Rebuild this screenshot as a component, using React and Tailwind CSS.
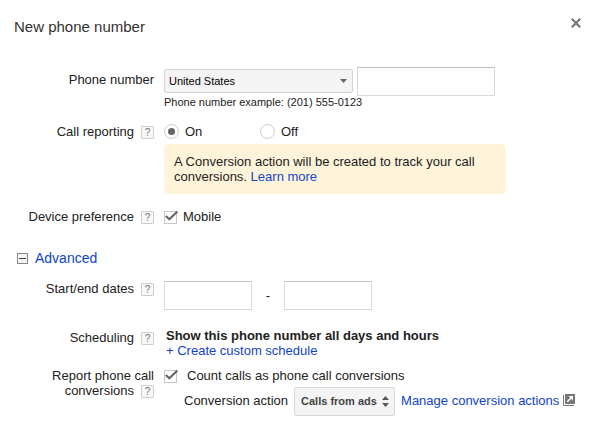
import React, { useState } from "react";

const link = "text-[#1144cc] hover:underline";

function Help({ topic }) {
  return (
    <button
      type="button"
      aria-label={`Help: ${topic}`}
      className="h-[13px] w-[13px] shrink-0 rounded-[1px] border border-[#cfcfcf] bg-[#f8f8f8] text-center text-[10px] leading-[11px] text-[#777777]"
    >
      ?
    </button>
  );
}

function Row({ label, className = "", labelClass = "", children }) {
  return (
    <div className={`grid grid-cols-[154px_1fr] gap-x-[10px] ${className}`}>
      <div className={`text-right ${labelClass}`}>{label}</div>
      <div className="min-w-0">{children}</div>
    </div>
  );
}

function LabelWithHelp({ htmlFor, id, children }) {
  return (
    <div className="flex items-start justify-end gap-[7px]">
      {htmlFor ? <label htmlFor={htmlFor}>{children}</label> : <span id={id}>{children}</span>}
      <div className="flex pt-[2px]">
        <Help topic={children} />
      </div>
    </div>
  );
}

function Check({ id, checked, onChange }) {
  return (
    <span className="relative mt-[2px] block h-[13px] w-[13px] shrink-0">
      <input
        id={id}
        type="checkbox"
        checked={checked}
        onChange={onChange}
        className="block h-[13px] w-[13px] appearance-none border border-[#c6c6c6] bg-white"
      />
      {checked && (
        <svg
          viewBox="0 0 15 13"
          className="pointer-events-none absolute top-[-1px] left-0 h-[13px] w-[15px]"
          aria-hidden="true"
        >
          <path d="M1.8 6 L5.3 9.3 L13.4 1.6" fill="none" stroke="#666666" strokeWidth="2.1" />
        </svg>
      )}
    </span>
  );
}

function Radio({ label, value, current, onChange }) {
  return (
    <label className="flex h-[15px] items-center gap-[6px]">
      <span className="grid h-[15px] w-[15px] shrink-0 place-items-center">
        <input
          type="radio"
          name="reporting"
          value={value}
          checked={current === value}
          onChange={() => onChange(value)}
          className="col-start-1 row-start-1 h-[15px] w-[15px] appearance-none rounded-full border border-[#cccccc] bg-white"
        />
        {current === value && (
          <span className="pointer-events-none z-10 col-start-1 row-start-1 h-[7px] w-[7px] rounded-full bg-[#666666]" />
        )}
      </span>
      {label}
    </label>
  );
}

const field = "block h-[29px] border border-[#d9d9d9] border-t-[#c0c0c0] bg-white px-2 text-[13px]";

export default function App() {
  const [reporting, setReporting] = useState("on");
  const [mobile, setMobile] = useState(true);
  const [count, setCount] = useState(true);
  const [open, setOpen] = useState(true);

  return (
    <main className="min-h-screen bg-white pb-[15px] font-['Liberation_Sans',Arial,sans-serif] text-[13px] leading-[15px] text-[#222222]">
      <header className="flex items-start justify-between pt-[18px] pr-[9px] pl-[14px]">
        <h1 className="text-[15px] leading-[18px] text-[#333333]">New phone number</h1>
        <button type="button" aria-label="Close" className="h-[10px] w-[10px]">
          <svg viewBox="0 0 10 10" className="h-[10px] w-[10px]" aria-hidden="true">
            <path d="M.8 .8 L9.2 9.2 M9.2 .8 L.8 9.2" stroke="#777777" strokeWidth="2.2" />
          </svg>
        </button>
      </header>

      <form className="mt-[31px]" onSubmit={(e) => e.preventDefault()}>
        <Row label={<label htmlFor="phone">Phone number</label>} labelClass="pt-[5px]">
          <div className="flex items-start gap-1">
            <div className="relative mt-[2px]">
              <select
                aria-label="Country"
                className="block h-[24px] w-[189px] appearance-none rounded-[2px] border border-[#d5d5d5] bg-[#f4f4f4] pr-5 pl-1 text-[11px] text-black"
              >
                <option>United States</option>
              </select>
              <svg
                viewBox="0 0 7 4"
                className="pointer-events-none absolute top-[10px] right-[6px] h-[4px] w-[7px]"
                aria-hidden="true"
              >
                <path d="M0 0 H7 L3.5 4 Z" fill="#666666" />
              </svg>
            </div>
            <input id="phone" type="tel" className={`${field} w-[138px]`} />
          </div>
          <p className="text-[11px] leading-[13px]">Phone number example: (201) 555-0123</p>
        </Row>

        <Row className="mt-[15px]" label={<LabelWithHelp id="reporting-label">Call reporting</LabelWithHelp>}>
          <div role="radiogroup" aria-labelledby="reporting-label" className="grid grid-cols-[96px_1fr]">
            <Radio label="On" value="on" current={reporting} onChange={setReporting} />
            <Radio label="Off" value="off" current={reporting} onChange={setReporting} />
          </div>
          <p className="mt-[5px] max-w-[342px] rounded-[5px] bg-[#fff4da] p-[10px]">
            A Conversion action will be created to track your call conversions.{" "}
            <a href="#learn" className={link}>Learn more</a>
          </p>
        </Row>

        <Row className="mt-[15px]" label={<LabelWithHelp id="device-label">Device preference</LabelWithHelp>}>
          <div className="flex gap-[6px]">
            <Check id="mobile" checked={mobile} onChange={() => setMobile(!mobile)} />
            <label htmlFor="mobile">Mobile</label>
          </div>
        </Row>

        <button
          type="button"
          aria-expanded={open}
          onClick={() => setOpen(!open)}
          className="mt-[26px] ml-[17px] flex items-center gap-[7px] text-[14px] leading-[16px] text-[#1144cc]"
        >
          <svg viewBox="0 0 11 11" className="h-[11px] w-[11px]" aria-hidden="true">
            <rect x=".5" y=".5" width="10" height="10" fill="#f4f4f4" stroke="#888888" />
            <path d="M2 5.5 H9" stroke="#444444" />
            {!open && <path d="M5.5 2 V9" stroke="#444444" />}
          </svg>
          Advanced
        </button>

        {open && (
          <div>
            <Row className="mt-[15px]" label={<LabelWithHelp htmlFor="start">Start/end dates</LabelWithHelp>}>
              <div className="flex items-center">
                <input id="start" type="text" aria-label="Start date" className={`${field} w-[88px]`} />
                <span className="w-[32px] text-center">-</span>
                <input type="text" aria-label="End date" className={`${field} w-[88px]`} />
              </div>
            </Row>

            <Row
              className="mt-[18px]"
              labelClass="pt-[2px]"
              label={<LabelWithHelp id="schedule-label">Scheduling</LabelWithHelp>}
            >
              <div className="pl-[2px]">
                <p className="font-bold">Show this phone number all days and hours</p>
                <a href="#schedule" className={`block w-fit ${link}`}>+ Create custom schedule</a>
              </div>
            </Row>

            <Row
              className="mt-[10px]"
              label={
                <div>
                  Report phone call
                  <LabelWithHelp id="conversions-label">conversions</LabelWithHelp>
                </div>
              }
            >
              <div className="flex gap-[10px]">
                <Check id="count" checked={count} onChange={() => setCount(!count)} />
                <label htmlFor="count">Count calls as phone call conversions</label>
              </div>
              <div className="mt-1 flex items-start gap-[6px] pl-[20px]">
                <label htmlFor="action" className="pt-[6px]">Conversion action</label>
                <div className="relative">
                  <select
                    id="action"
                    className="block h-[29px] w-[101px] appearance-none rounded-[2px] border border-[#d9d9d9] bg-[#f4f4f4] pr-4 pl-[6px] text-[11px] font-bold text-[#444444]"
                  >
                    <option>Calls from ads</option>
                  </select>
                  <svg
                    viewBox="0 0 7 11"
                    className="pointer-events-none absolute top-[9px] right-[6px] h-[11px] w-[7px]"
                    aria-hidden="true"
                  >
                    <path d="M0 4 L3.5 0 L7 4 Z M0 7 L3.5 11 L7 7 Z" fill="#555555" />
                  </svg>
                </div>
                <a href="#actions" className={`flex items-start gap-1 pt-[6px] whitespace-nowrap ${link}`}>
                  Manage conversion actions
                  <svg viewBox="0 0 12 12" className="mt-px h-[12px] w-[12px]" aria-hidden="true">
                    <path d="M2 0 H12 V10 H2 Z" fill="#777777" />
                    <path d="M.5 1 V11.5 H11" fill="none" stroke="#777777" />
                    <path d="M4.3 7.7 L8.5 3.5" fill="none" stroke="#ffffff" strokeWidth="1.5" />
                    <path d="M5.5 2 H10 V6.5 Z" fill="#ffffff" />
                  </svg>
                </a>
              </div>
            </Row>
          </div>
        )}
      </form>
    </main>
  );
}
